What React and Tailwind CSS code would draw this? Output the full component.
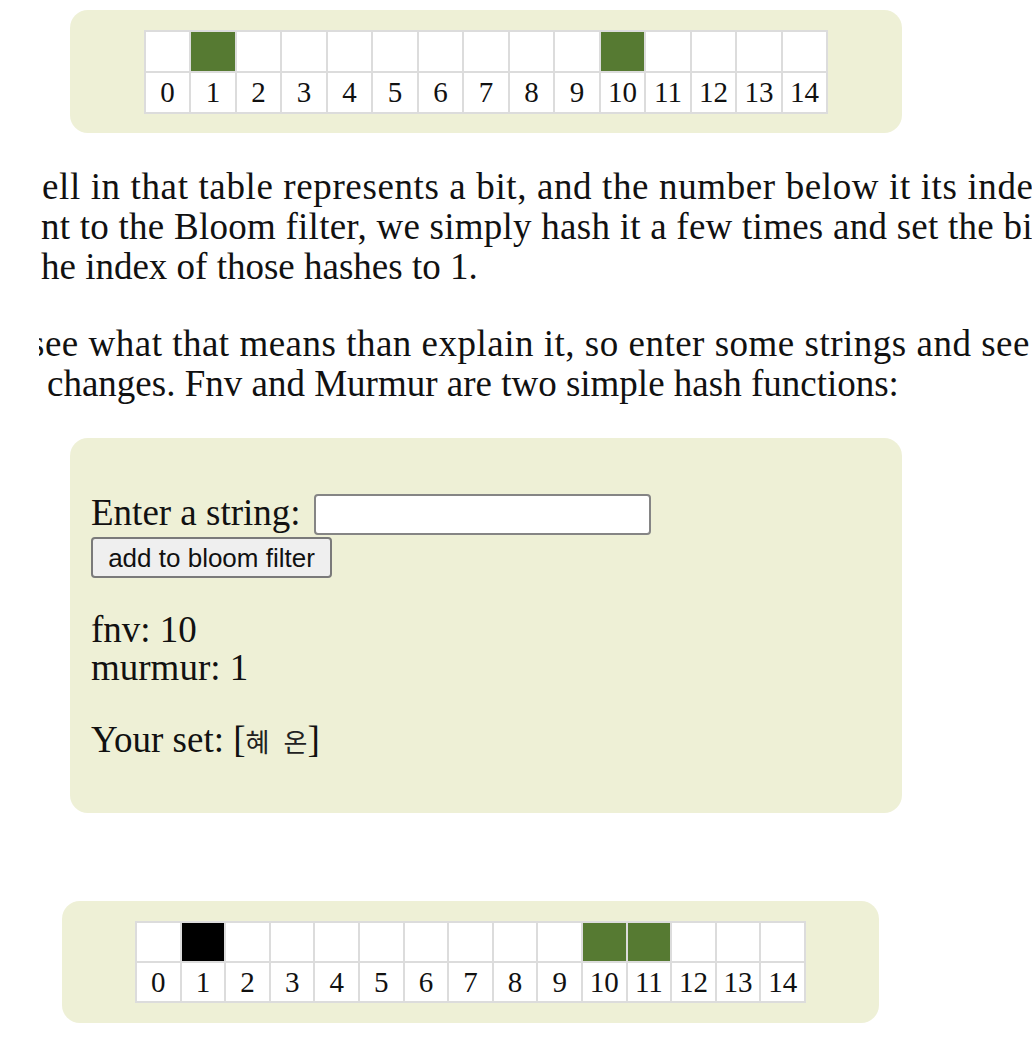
import React from "react";

const CELLS = Array.from({ length: 15 }, (_, i) => i);

function BitTable({ colors, gridClass, rowClass }) {
  return (
    <div className={`grid ${gridClass} gap-[2px] p-[2px] bg-[#dcdcdc]`}>
      {CELLS.map((i) => (
        <div key={`t${i}`} className={`${rowClass} ${colors[i] || "bg-white"}`} />
      ))}
      {CELLS.map((i) => (
        <div
          key={`b${i}`}
          className={`${rowClass} bg-white flex items-center justify-center text-[29px] leading-none oldstyle-nums`}
        >
          {i}
        </div>
      ))}
    </div>
  );
}

export default function App() {
  const green = "bg-[#567a32]";
  return (
    <div className="w-[1032px] h-[1052px] overflow-hidden bg-white text-[#111111] font-['Liberation_Serif',serif]">
      <div className="pt-[10px]">
        <div className="ml-[70px] w-[832px] h-[123px] rounded-[18px] bg-[#eef0d6] flex items-center justify-center">
          <BitTable
            colors={{ 1: green, 10: green }}
            gridClass="grid-cols-[repeat(15,43.5px)]"
            rowClass="h-[39px]"
          />
        </div>
      </div>

      <div className="mt-[34px] ml-[39px] w-[993px] overflow-hidden text-[37px] leading-[40px] whitespace-nowrap">
        <p className="ml-[3px] tracking-[0.62px]">ell in that table represents a bit, and the number below it its index. To add an</p>
        <p className="ml-[2px] tracking-[0.25px]">nt to the Bloom filter, we simply hash it a few times and set the bits in the bit vector</p>
        <p className="ml-[2px]">he index of those hashes to 1.</p>
        <p className="mt-[37px] ml-[-9px] tracking-[0.5px]">see what that means than explain it, so enter some strings and see how the bit vector</p>
        <p className="ml-[8px]">changes. Fnv and Murmur are two simple hash functions:</p>
      </div>

      <div className="mt-[34px] ml-[70px] w-[832px] h-[375px] rounded-[18px] bg-[#eef0d6] pt-[52px] px-[21px] text-[37px]">
        <div className="flex items-start">
          <span className="mt-[4px] leading-[38px]">Enter a string:</span>
          <input
            type="text"
            className="ml-[13px] mt-[4px] w-[337px] h-[41px] bg-white border-2 border-[#858585] rounded-[4px] outline-none"
          />
        </div>
        <button className="block mt-[2px] w-[241px] h-[41px] bg-[#efefef] border-2 border-[#7a7a7a] rounded-[4px] font-['Liberation_Sans',sans-serif] text-[26px] leading-none text-[#111111]">
          add to bloom filter
        </button>
        <div className="mt-[33px] leading-[38px]">
          <div>fnv: 10</div>
          <div>murmur: 1</div>
          <div className="mt-[34px]">
            Your set: [
            <span className="font-['Noto_Sans_CJK_KR',sans-serif] text-[26px] text-[#222222]">혜</span>
            <span className="ml-[14px] font-['Noto_Sans_CJK_KR',sans-serif] text-[26px] text-[#222222]">온</span>
            ]
          </div>
        </div>
      </div>

      <div className="mt-[88px] ml-[62px] w-[817px] h-[122px] rounded-[18px] bg-[#eef0d6] flex items-center justify-center">
        <BitTable
          colors={{ 1: "bg-black", 10: green, 11: green }}
          gridClass="grid-cols-[repeat(15,42.6px)]"
          rowClass="h-[38px]"
        />
      </div>
    </div>
  );
}
